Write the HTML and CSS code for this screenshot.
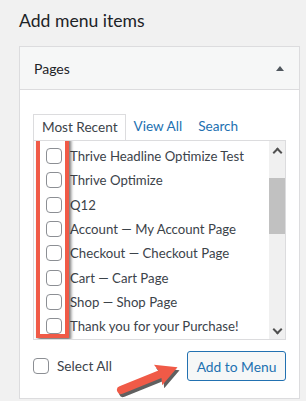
FILE: index.html
```html
<!DOCTYPE html>
<html lang="en">
<head>
    <meta charset="UTF-8">
    <meta name="viewport" content="width=device-width, initial-scale=1.0">
    <title>Add menu items</title>
    <link rel="stylesheet" href="styles.css">
</head>
<body>
    <h2 class="page-title">Add menu items</h2>

    <!-- Pages box -->
    <div class="panel">
        <div class="panel-header">
            <span>Pages</span>
            <span class="toggle"></span>
        </div>

        <div class="panel-body">
            <ul class="tabs">
                <li class="tab active">Most Recent</li>
                <li class="tab">View All</li>
                <li class="tab">Search</li>
            </ul>

            <div class="list-box">
                <ul class="page-list">
                    <li><span class="check"></span>Thrive Headline Optimize Test</li>
                    <li><span class="check"></span>Thrive Optimize</li>
                    <li><span class="check"></span>Q12</li>
                    <li><span class="check"></span>Account — My Account Page</li>
                    <li><span class="check"></span>Checkout — Checkout Page</li>
                    <li><span class="check"></span>Cart — Cart Page</li>
                    <li><span class="check"></span>Shop — Shop Page</li>
                    <li><span class="check"></span>Thank you for your Purchase!</li>
                </ul>
                <div class="scrollbar">
                    <span class="arrow up"></span>
                    <span class="thumb"></span>
                    <span class="arrow down"></span>
                </div>

                <!-- annotation box round the checkboxes -->
                <div class="highlight"></div>
            </div>

            <div class="panel-footer">
                <label class="select-all"><span class="check"></span>Select All</label>
                <button class="add-btn">Add to Menu</button>
            </div>

            <!-- annotation arrow -->
            <svg class="pointer" width="72" height="40" viewBox="0 0 72 40">
                <g transform="translate(7,33) rotate(-22)" fill="#2b2b2b" opacity="0.75">
                    <path d="M0 -4 L42 -4 L40 -11 L61 0 L40 11 L42 4 L0 4 A4 4 0 0 1 0 -4 Z"/>
                </g>
                <g transform="translate(5,30) rotate(-22)" fill="#f05a47">
                    <path d="M0 -4 L42 -4 L40 -11 L61 0 L40 11 L42 4 L0 4 A4 4 0 0 1 0 -4 Z"/>
                </g>
            </svg>
        </div>
    </div>
</body>
</html>
```

FILE: styles.css
```css
body {
    font-family: Lato, "Open Sans", sans-serif;
    margin: 0;
    padding: 0 6px 0 19px;
    background-color: #f1f1f1;
    color: #3c434a;
    overflow: hidden;
}

.page-title {
    font-size: 17.6px;
    font-weight: 400;
    color: #1d2327;
    margin: 0;
    padding: 9px 0 0;
    height: 37px;
    line-height: 24px;
}

.panel {
    border: 1px solid #dcdcde;
    background: #fff;
}

.panel-header {
    display: flex;
    justify-content: space-between;
    align-items: center;
    height: 42px;
    padding: 0 15px 0 14px;
    background: #f6f7f7;
    border-bottom: 1px solid #dcdcde;
    font-size: 14px;
    color: #1d2327;
}

.toggle {
    width: 0;
    height: 0;
    border-left: 4px solid transparent;
    border-right: 4px solid transparent;
    border-bottom: 5px solid #50575e;
}

.panel-body {
    position: relative;
    padding: 24px 13px 17px 13px;
}

.tabs {
    list-style: none;
    margin: 0;
    padding: 0;
    display: flex;
    height: 26px;
    font-size: 13.6px;
}

.tab {
    padding: 0 8px 0 8px;
    line-height: 25px;
    color: #2271b1;
}

.tab.active {
    color: #3c434a;
    background: #fff;
    border: 1px solid #dcdcde;
    border-bottom: none;
    line-height: 25px;
    padding: 0 7px 0 8px;
}

.list-box {
    position: relative;
    display: flex;
    height: 198px;
    border: 1px solid #dcdcde;
    overflow: hidden;
}

.page-list {
    list-style: none;
    margin: 0;
    padding: 3px 0 0 12px;
    flex: 1;
    font-size: 13.2px;
}

.page-list li {
    display: flex;
    align-items: center;
    height: 24.3px;
    white-space: nowrap;
}

.check {
    flex: none;
    width: 14px;
    height: 14px;
    border: 1px solid #8c8f94;
    border-radius: 4px;
    background: #fff;
    margin-right: 8px;
}

.scrollbar {
    width: 16px;
    flex: none;
    background: #f0f0f0;
    display: flex;
    flex-direction: column;
    align-items: center;
}

.arrow {
    width: 5px;
    height: 5px;
    border-left: 2px solid #505050;
    border-top: 2px solid #505050;
}

.arrow.up {
    transform: rotate(45deg);
    margin: 8px 0 0;
}

.arrow.down {
    transform: rotate(225deg);
    margin: auto 0 6px;
}

.thumb {
    width: 16px;
    height: 56px;
    background: #c1c1c1;
    margin-top: 22px;
}

.highlight {
    position: absolute;
    left: 2px;
    top: -4px;
    width: 25px;
    height: 193px;
    border: 4px solid #f05a47;
    box-shadow: 2px 2px 3px rgba(0, 0, 0, 0.55);
}

.panel-footer {
    display: flex;
    justify-content: space-between;
    align-items: center;
    margin-top: 11px;
}

.select-all {
    display: flex;
    align-items: center;
    font-size: 13.6px;
}

.select-all .check {
    margin-right: 8px;
}

.add-btn {
    font-family: inherit;
    font-size: 13.8px;
    color: #2271b1;
    background: #f6f7f7;
    border: 1px solid #2271b1;
    border-radius: 3px;
    height: 30px;
    width: 99px;
    padding: 0;
}

.pointer {
    position: absolute;
    left: 96px;
    top: 270px;
}
```
